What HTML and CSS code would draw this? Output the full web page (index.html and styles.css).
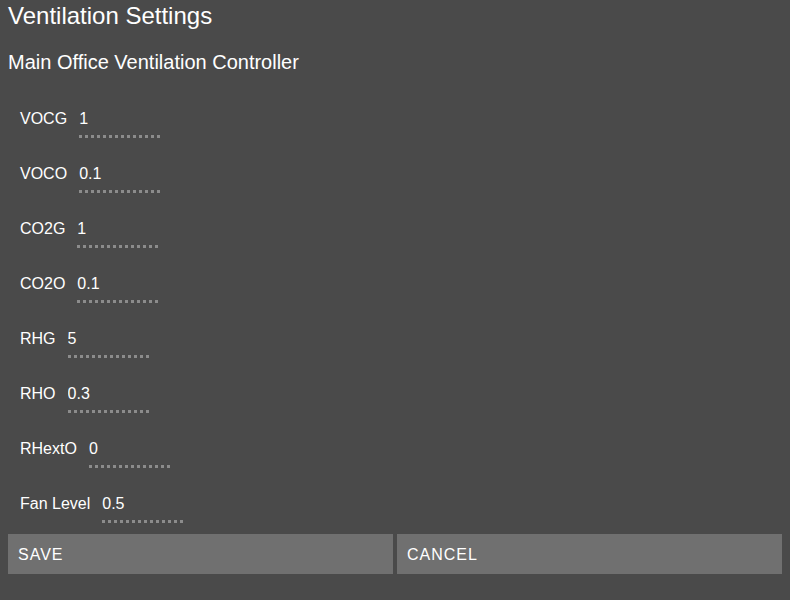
FILE: index.html
```html
<!DOCTYPE html>
<html>
<head>
<meta charset="utf-8">
<link rel="stylesheet" href="styles.css">
</head>
<body>
<h1 class="title">Ventilation Settings</h1>
<h2 class="subtitle">Main Office Ventilation Controller</h2>
<form class="form">
  <div class="fields">
    <label class="row"><span class="label">VOCG</span><input class="value" type="text" value="1"></label>
    <label class="row"><span class="label">VOCO</span><input class="value" type="text" value="0.1"></label>
    <label class="row"><span class="label">CO2G</span><input class="value" type="text" value="1"></label>
    <label class="row"><span class="label">CO2O</span><input class="value" type="text" value="0.1"></label>
    <label class="row"><span class="label">RHG</span><input class="value" type="text" value="5"></label>
    <label class="row"><span class="label">RHO</span><input class="value" type="text" value="0.3"></label>
    <label class="row"><span class="label">RHextO</span><input class="value" type="text" value="0"></label>
    <label class="row"><span class="label">Fan Level</span><input class="value" type="text" value="0.5"></label>
  </div>
  <div class="buttons">
    <button type="button" class="btn">SAVE</button>
    <button type="button" class="btn">CANCEL</button>
  </div>
</form>
</body>
</html>
```
FILE: styles.css
```css
html, body {
  background: #4a4a4a;
}
body {
  margin: 0;
  padding: 2px 8px 0;
  color: #ffffff;
  font-family: "Liberation Sans", Arial, sans-serif;
}
.title {
  margin: 0;
  font-size: 24px;
  line-height: 28px;
  font-weight: normal;
}
.subtitle {
  margin: 21px 0 0;
  font-size: 20px;
  line-height: 23px;
  font-weight: normal;
}
.form {
  margin: 35px 0 0;
}
.fields {
  display: flex;
  flex-direction: column;
  gap: 26px;
  padding-left: 12px;
}
.row {
  display: flex;
  align-items: flex-start;
  gap: 12px;
  font-size: 16px;
  line-height: 20px;
}
.label {
  display: block;
}
.value {
  display: block;
  width: 82px;
  box-sizing: border-box;
  margin: 0;
  padding: 0 0 9px;
  border: none;
  background-color: transparent;
  background-image: linear-gradient(to right, #8c8c8c 0 3px, transparent 3px 6px);
  background-size: 6px 3px;
  background-repeat: repeat-x;
  background-position: left bottom;
  color: #ffffff;
  font: inherit;
  line-height: 20px;
  height: 29px;
  outline: none;
}
.buttons {
  display: flex;
  gap: 4px;
  margin-top: 11px;
}
.btn {
  flex: 1;
  height: 40px;
  margin: 0;
  padding: 2px 10px 0;
  border: none;
  background: #707070;
  color: #ffffff;
  font-family: "Liberation Sans", Arial, sans-serif;
  font-size: 16px;
  line-height: 18px;
  letter-spacing: 1px;
  text-align: left;
}
```
